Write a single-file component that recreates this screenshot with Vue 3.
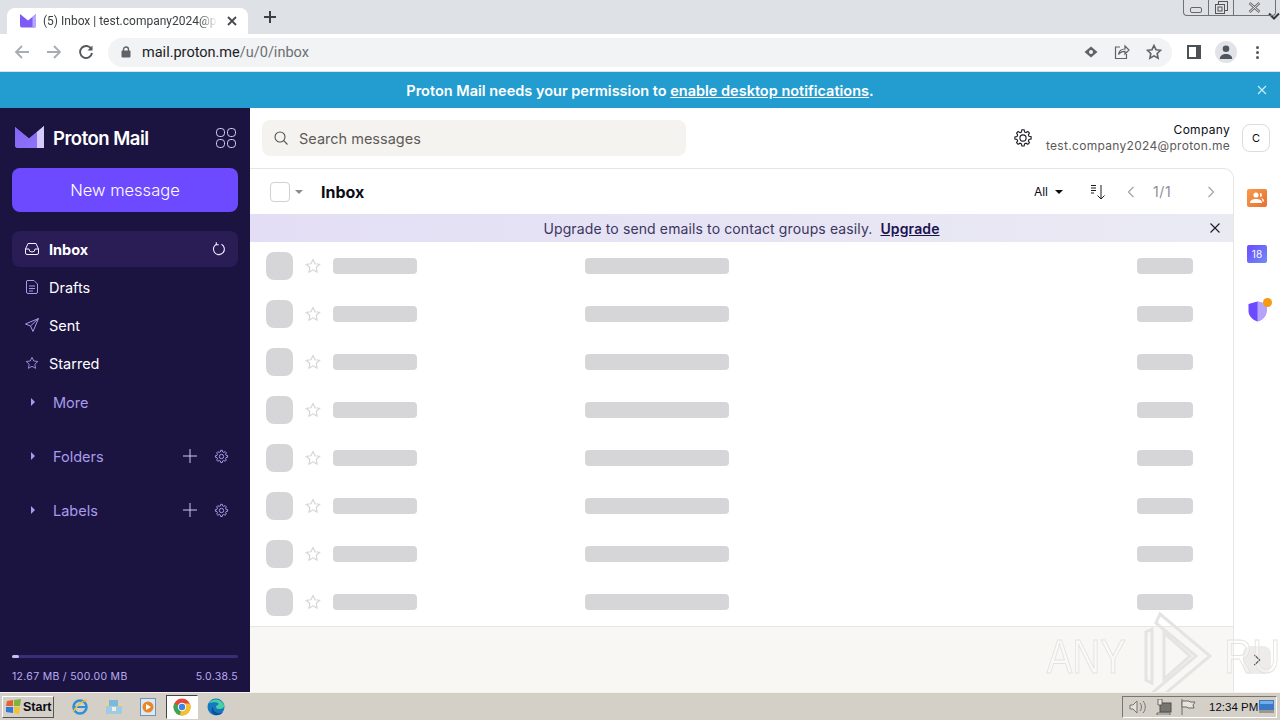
<script setup>
const navItems = [
  { label: 'Drafts', icon: 'drafts' },
  { label: 'Sent', icon: 'sent' },
  { label: 'Starred', icon: 'star' },
]
const groups = ['Folders', 'Labels']
const skeletonRows = 8
const gear = 'M8 1.6h2l.4 1.9 1.3.6 1.7-1 1.4 1.4-1 1.7.6 1.3 1.9.4v2l-1.9.4-.6 1.3 1 1.7-1.4 1.4-1.7-1-1.3.6-.4 1.9H8l-.4-1.9-1.3-.6-1.7 1-1.4-1.4 1-1.7-.6-1.3-1.9-.4V8l1.9-.4.6-1.3-1-1.7 1.4-1.4 1.7 1 1.3-.6z'
const starPath = 'M8 1.5l2 4.2 4.6.6-3.4 3.2.9 4.6L8 11.8l-4.1 2.3.9-4.6L1.4 6.3 6 5.7z'
</script>

<template>
  <div class="screen">
    <div class="tabstrip">
      <div class="tab">
        <svg class="favicon" width="16" height="14" viewBox="0 0 16 14">
          <path d="M0 0l8 6.5L16 0v11.5a2 2 0 0 1-2 2H2a2 2 0 0 1-2-2z" fill="#7d5cf5" />
          <path d="M16 0v13.5h-3.5V3z" fill="#b9a6ff" />
        </svg>
        <span class="tab-title">(5) Inbox | test.company2024@proton.me</span>
        <svg class="tab-close" width="10" height="10" viewBox="0 0 10 10">
          <path d="M1 1l8 8M9 1l-8 8" stroke="#45484d" stroke-width="1.8" />
        </svg>
      </div>
      <svg class="tab-plus" width="14" height="14" viewBox="0 0 14 14">
        <path d="M7 1v12M1 7h12" stroke="#3c4043" stroke-width="2" />
      </svg>
      <svg class="tab-chevron" width="12" height="8" viewBox="0 0 12 8">
        <path d="M1 1.5l5 5 5-5" fill="none" stroke="#35383c" stroke-width="2" />
      </svg>
      <div class="winbtns">
        <div class="winbtn w-min"><span class="min-glyph"></span></div>
        <div class="winbtn w-max">
          <svg width="13" height="13" viewBox="0 0 13 13">
            <rect x="3.5" y=".5" width="9" height="9" fill="#dee1e6" stroke="#555" />
            <rect x=".5" y="3.5" width="9" height="9" fill="#dee1e6" stroke="#555" />
            <rect x="3" y="6" width="4" height="4" fill="none" stroke="#555" />
          </svg>
        </div>
        <div class="winbtn w-close">
          <svg width="13" height="11" viewBox="0 0 13 11">
            <path d="M1.5 1l10 9M11.5 1l-10 9" stroke="#666" stroke-width="2.4" />
            <path d="M1.5 1l10 9M11.5 1l-10 9" stroke="#e9ebee" stroke-width="1" />
          </svg>
        </div>
      </div>
    </div>

    <div class="toolbar">
      <svg class="tb-nav" width="16" height="16" viewBox="0 0 16 16">
        <path d="M15 8H2M8 2L2 8l6 6" fill="none" stroke="#a9acb0" stroke-width="1.8" />
      </svg>
      <svg class="tb-nav" width="16" height="16" viewBox="0 0 16 16">
        <path d="M1 8h13M8 2l6 6-6 6" fill="none" stroke="#a9acb0" stroke-width="1.8" />
      </svg>
      <svg class="tb-nav" width="16" height="16" viewBox="0 0 16 16">
        <path d="M13.4 5.2A6 6 0 1 0 14 9" fill="none" stroke="#55585c" stroke-width="1.9" />
        <path d="M14.5 1.5v5h-5z" fill="#55585c" />
      </svg>
      <div class="omnibox">
        <svg class="lock" width="10" height="12" viewBox="0 0 10 12">
          <path d="M2.5 5V3.5a2.5 2.5 0 0 1 5 0V5" fill="none" stroke="#5f6368" stroke-width="1.4" />
          <rect x=".5" y="4.5" width="9" height="7" rx="1" fill="#5f6368" />
        </svg>
        <span class="url"><b>mail.proton.me</b>/u/0/inbox</span>
        <svg class="omni-icon" width="14" height="12" viewBox="0 0 14 12">
          <path d="M7 .5L13.5 6 7 11.5.5 6z" fill="#5f6368" />
          <circle cx="7" cy="6" r="2" fill="#f1f3f4" />
        </svg>
        <svg class="omni-icon" width="16" height="16" viewBox="0 0 16 16">
          <path d="M6 3H1.5v11.5h11V10" fill="none" stroke="#5f6368" stroke-width="1.2" />
          <path d="M4.5 10.5C5 6.5 8 5 11 5V2l4 4-4 4V7.3c-2.5 0-5 .8-6.500 3.200z" fill="none" stroke="#5f6368" stroke-width="1.2" />
        </svg>
        <svg class="omni-icon" width="16" height="16" viewBox="0 0 16 16">
          <path :d="starPath" fill="none" stroke="#5f6368" stroke-width="1.6" />
        </svg>
      </div>
      <svg class="side-panel" width="14" height="14" viewBox="0 0 14 14">
        <rect x="1" y="1" width="12" height="12" fill="#fff" stroke="#4d5054" stroke-width="2" />
        <rect x="9" y="1" width="4" height="12" fill="#4d5054" />
      </svg>
      <div class="profile">
        <svg width="14" height="14" viewBox="0 0 14 14">
          <circle cx="7" cy="3.800" r="3.300" fill="#51555e" />
          <path d="M.8 14c0-3.500 2.800-5 6.200-5s6.200 1.500 6.200 5z" fill="#51555e" />
        </svg>
      </div>
      <div class="kebab"><i></i><i></i><i></i></div>
    </div>

    <div class="banner">
      <span>Proton Mail needs your permission to <u>enable desktop notifications</u>.</span>
      <svg class="banner-close" width="10" height="10" viewBox="0 0 10 10">
        <path d="M1 1l8 8M9 1l-8 8" stroke="#c6eefb" stroke-width="1.200" />
      </svg>
    </div>

    <div class="app">
      <aside class="sidebar">
        <div class="brand">
          <svg width="29" height="23" viewBox="0 0 29 23">
            <defs>
              <linearGradient id="mailg" x1="0" y1="0" x2="1" y2="1">
                <stop offset="0" stop-color="#8f74f8" />
                <stop offset="1" stop-color="#c8b8ff" />
              </linearGradient>
            </defs>
            <path d="M0 1l14 11.500L29 0v19a3 3 0 0 1-3 3H3a3 3 0 0 1-3-3z" fill="url(#mailg)" />
            <path d="M29 0v22h-7V6z" fill="#d5caff" />
            <path d="M0 1l14 11.500L22 6v16H3a3 3 0 0 1-3-3z" fill="#7f5ff5" opacity=".75" />
          </svg>
          <span class="wordmark">Proton Mail</span>
          <svg class="apps" width="20" height="20" viewBox="0 0 20 20" fill="none" stroke="#d6cffb">
            <rect x=".5" y=".5" width="8" height="8" rx="3.200" />
            <rect x="11.500" y=".5" width="8" height="8" rx="3.200" />
            <rect x=".5" y="11.500" width="8" height="8" rx="3.200" />
            <rect x="11.500" y="11.500" width="8" height="8" rx="3.200" />
          </svg>
        </div>
        <button class="compose">New message</button>

        <nav class="nav">
          <div class="nav-item active">
            <svg class="nav-icon" width="14" height="14" viewBox="0 0 14 14" fill="none" stroke="#f2efff">
              <path d="M.5 7L3 1.500h8L13.500 7v4a1.500 1.500 0 0 1-1.500 1.500H2A1.500 1.500 0 0 1 .5 11z" />
              <path d="M.5 7H4a3 3 0 0 0 6 0h3.500" />
            </svg>
            <span class="nav-label">Inbox</span>
            <svg class="refresh" width="14" height="14" viewBox="0 0 14 14" fill="none" stroke="#f2efff" stroke-width="1.100">
              <path d="M9.500 2.300A5.500 5.500 0 1 1 4.500 2.200" />
              <path d="M4.300 .3v2.500h2.500" />
            </svg>
          </div>
          <div v-for="item in navItems" :key="item.label" class="nav-item">
            <svg v-if="item.icon === 'drafts'" class="nav-icon" width="14" height="14" viewBox="0 0 14 14" fill="none" stroke="#a99bec">
              <path d="M2 .5h7L12.500 4v8a1.500 1.500 0 0 1-1.500 1.500H3A1.500 1.500 0 0 1 1.500 12V1zM4 6h6M4 8.500h6M4 11h4" />
            </svg>
            <svg v-else-if="item.icon === 'sent'" class="nav-icon" width="14" height="14" viewBox="0 0 14 14" fill="none" stroke="#a99bec">
              <path d="M13.500.5L.5 6l5 2 2.500 5.500zM5.500 8L13.500.5" />
            </svg>
            <svg v-else class="nav-icon" width="14" height="14" viewBox="0 0 16 16" fill="none" stroke="#a99bec">
              <path :d="starPath" />
            </svg>
            <span class="nav-label">{{ item.label }}</span>
          </div>
          <div class="nav-item muted more">
            <span class="caret-right"></span>
            <span class="nav-label">More</span>
          </div>
          <div v-for="group in groups" :key="group" class="nav-item muted group">
            <span class="caret-right"></span>
            <span class="nav-label">{{ group }}</span>
            <svg class="plus" width="14" height="14" viewBox="0 0 14 14">
              <path d="M7 0v14M0 7h14" stroke="#cfc7f7" />
            </svg>
            <svg class="cog" width="15" height="15" viewBox="0 0 18 18" fill="none" stroke="#a99bec" stroke-width="1.200">
              <path :d="gear" />
              <circle cx="9" cy="9" r="2.600" />
            </svg>
          </div>
        </nav>

        <div class="storage">
          <div class="storage-track"><div class="storage-fill" :style="{ width: '3%' }"></div></div>
          <div class="storage-meta">
            <span>12.67 MB / 500.00 MB</span>
            <span>5.0.38.5</span>
          </div>
        </div>
      </aside>

      <main class="main">
        <header class="topbar">
          <div class="search">
            <svg width="14" height="14" viewBox="0 0 14 14" fill="none" stroke="#55534f" stroke-width="1.100">
              <circle cx="6" cy="6" r="5" />
              <path d="M9.700 9.700L13.500 13.500" />
            </svg>
            <span>Search messages</span>
          </div>
          <svg class="top-gear" width="20" height="20" viewBox="0 0 18 18" fill="none" stroke="#1c1b24" stroke-width="1">
            <path :d="gear" />
            <circle cx="9" cy="9" r="2.800" />
          </svg>
          <div class="account">
            <div class="account-name">Company</div>
            <div class="account-mail">test.company2024@proton.me</div>
          </div>
          <div class="avatar">C</div>
        </header>

        <div class="workspace">
          <section class="mail-pane">
            <div class="list-tools">
              <span class="checkbox"></span>
              <span class="caret-down soft"></span>
              <h1>Inbox</h1>
              <span class="all">All</span>
              <span class="caret-down"></span>
              <svg class="sort" width="14" height="16" viewBox="0 0 14 16" fill="none" stroke="#1c1b24">
                <path d="M0 1.500h5M0 4h5M0 6.500h5M0 9h3" />
                <path d="M10 1v14M6.500 11.500L10 15l3.500-3.500" />
              </svg>
              <svg class="pager first" width="8" height="12" viewBox="0 0 8 12">
                <path d="M6.500 1L1.500 6l5 5" fill="none" stroke="#a5a4ab" stroke-width="1.300" />
              </svg>
              <span class="pages">1/1</span>
              <svg class="pager" width="8" height="12" viewBox="0 0 8 12">
                <path d="M1.500 1l5 5-5 5" fill="none" stroke="#a5a4ab" stroke-width="1.300" />
              </svg>
            </div>
            <div class="upsell">
              <span>Upgrade to send emails to contact groups easily.</span>
              <a>Upgrade</a>
              <svg class="upsell-close" width="10" height="10" viewBox="0 0 10 10">
                <path d="M.5.5l9 9M9.500.5l-9 9" stroke="#1c1b24" stroke-width="1.100" />
              </svg>
            </div>
            <div v-for="n in skeletonRows" :key="n" class="row">
              <span class="sk-avatar"></span>
              <svg class="sk-star" width="16" height="16" viewBox="0 0 16 16">
                <path :d="starPath" fill="none" stroke="#d4d3d8" stroke-width="1.100" />
              </svg>
              <span class="sk sk-name"></span>
              <span class="sk sk-subject"></span>
              <span class="sk sk-date"></span>
            </div>
            <div class="pane-footer"></div>
          </section>

          <aside class="rail">
            <div class="rail-app contacts">
              <svg width="14" height="12" viewBox="0 0 14 12" fill="#fff">
                <circle cx="6" cy="3" r="2.600" />
                <path d="M0 11c0-3 2.500-4 6-4s6 1 6 4z" />
                <path d="M10 1a2 2 0 0 1 0 4zM11 6c2 .3 3 1.500 3 3.500h-1.500c0-1.500-.5-2.500-1.500-3.500z" />
              </svg>
            </div>
            <div class="rail-app calendar">18</div>
            <div class="rail-shield">
              <svg width="19" height="21" viewBox="0 0 19 21">
                <path d="M.5 3L9.500.5 18.500 3v7c0 5-4 9-9 10.500C4.500 19 .5 15 .5 10z" fill="#6d4aff" />
                <path d="M9.500.5L18.500 3v7c0 5-4 9-9 10.500z" fill="#b5a4fb" />
              </svg>
              <i></i>
            </div>
            <div class="rail-toggle">
              <svg width="8" height="12" viewBox="0 0 8 12">
                <path d="M1.500 1l5 5-5 5" fill="none" stroke="#1c1b24" stroke-width="1.300" />
              </svg>
            </div>
          </aside>

          <div class="watermark">
            <span>ANY</span>
            <svg width="74" height="94" viewBox="0 0 74 94" fill="none" stroke="#e4e4e2" stroke-width="3">
              <path d="M14 20L8 23v48l6 3zM22 5l50 42-50 42-8-5 44-37L18 14z" />
              <path d="M26 24l26 23-26 23z" />
            </svg>
            <span>RUN</span>
          </div>
        </div>
      </main>
    </div>

    <footer class="taskbar">
      <div class="start">
        <svg width="16" height="15" viewBox="0 0 16 15">
          <path d="M1 2l6-1v6H0z" fill="#e8632b" />
          <path d="M8 1l7-1-1 7H8z" fill="#7db53c" />
          <path d="M0 8h7v6l-7-1z" fill="#2f7bd6" />
          <path d="M8 8h6l-1 7-5-1z" fill="#f2c32e" />
        </svg>
        <b>Start</b>
      </div>
      <div class="quick ie">
        <svg width="18" height="18" viewBox="0 0 18 18" fill="none">
          <circle cx="9" cy="9" r="6.500" stroke="#2f8fd8" stroke-width="2.500" />
          <path d="M3 9h12" stroke="#2f8fd8" stroke-width="2" />
          <path d="M2 14C5 8 11 3 16 2" stroke="#eec23e" stroke-width="1.500" />
        </svg>
      </div>
      <div class="quick folder">
        <svg width="18" height="16" viewBox="0 0 18 16">
          <path d="M1 3h6l1 2h9v10H1z" fill="#e9d48a" />
          <rect x="4" y="1" width="9" height="6" fill="#7cb7dc" />
          <path d="M1 7h16v8H1z" fill="#9fcbe4" />
          <rect x="7" y="8" width="4" height="4" fill="#f3efe0" />
        </svg>
      </div>
      <div class="quick media">
        <svg width="16" height="18" viewBox="0 0 16 18">
          <rect x=".5" y=".5" width="15" height="17" fill="#dce8f2" stroke="#6e94b8" />
          <circle cx="8" cy="9" r="5.500" fill="#e8872a" />
          <path d="M6 6l5 3-5 3z" fill="#fff" />
        </svg>
      </div>
      <div class="quick chrome-task">
        <svg width="18" height="18" viewBox="0 0 18 18">
          <circle cx="9" cy="9" r="8.500" fill="#e0483c" />
          <path d="M9 9L1.400 5.500A8.500 8.500 0 0 0 7 17.300z" fill="#3aa757" />
          <path d="M9 5.500h7.800A8.500 8.500 0 0 1 7 17.300z" fill="#f6c02c" />
          <circle cx="9" cy="9" r="4.200" fill="#fff" />
          <circle cx="9" cy="9" r="3.200" fill="#3f83e8" />
        </svg>
      </div>
      <div class="quick edge">
        <svg width="18" height="18" viewBox="0 0 18 18">
          <circle cx="9" cy="9" r="8.500" fill="#1577c2" />
          <path d="M2 5C5 0 14 0 17 7c.5 3-2 4-5 4-2 0-3-1-3-2 0-2 4-2 2-4-2-1.500-6 0-9 0z" fill="#45d1a0" />
          <path d="M6 9c0 5 5 8 10 5-2 3.500-7 4-10 1.500C4 14 4 11 6 9z" fill="#0d4f92" />
        </svg>
      </div>
      <div class="tray">
        <svg width="18" height="14" viewBox="0 0 18 14" fill="none" stroke="#77756f">
          <path d="M1 5h3l4-4v12l-4-4H1z" fill="#e5e2da" />
          <path d="M11 3c2 2 2 6 0 8M14 1c3 3 3 9 0 12" />
        </svg>
        <svg class="tray-net" width="16" height="16" viewBox="0 0 16 16">
          <rect x="4" y="4" width="11" height="9" fill="#77756f" stroke="#4f4e4a" />
          <path d="M2 0h4v6H2zM1 14h13v2H1z" fill="#e7e4dc" stroke="#4f4e4a" stroke-width=".8" />
        </svg>
        <svg class="tray-flag" width="16" height="16" viewBox="0 0 16 16" fill="#e7e4dc" stroke="#6b6a65">
          <path d="M2 0v16" />
          <path d="M2 2h7l1 1h5l-2 3 1 3H8L7 8H2z" />
        </svg>
        <span class="clock">12:34 PM</span>
        <svg class="tray-desk" width="15" height="13" viewBox="0 0 15 13">
          <rect width="15" height="13" fill="#3a78c8" />
          <rect y="10" width="15" height="3" fill="#9a9890" />
          <rect x="1" y="1" width="13" height="3" fill="#74aee6" />
        </svg>
      </div>
    </footer>
  </div>
</template>

<style>
html, body {
  margin: 0;
  overflow: hidden;
}
</style>

<style scoped>
* {
  box-sizing: border-box;
}

.screen {
  width: 1280px;
  height: 720px;
  display: flex;
  flex-direction: column;
  overflow: hidden;
  font-family: Inter, "Liberation Sans", sans-serif;
  color: #0c0c14;
}

/* browser chrome */
.tabstrip {
  height: 34px;
  flex: none;
  background: #dee1e6;
  display: flex;
  align-items: flex-end;
  position: relative;
}

.tab {
  width: 241px;
  height: 26px;
  margin-left: 7px;
  padding: 0 10px 0 13px;
  background: #fff;
  border-radius: 8px 8px 0 0;
  display: flex;
  align-items: center;
  gap: 7px;
}

.favicon {
  flex: none;
}

.tab-title {
  width: 174px;
  overflow: hidden;
  white-space: nowrap;
  font: 12px Roboto, sans-serif;
  color: #3c4043;
  -webkit-mask-image: linear-gradient(to right, #000 90%, transparent);
  mask-image: linear-gradient(to right, #000 90%, transparent);
}

.tab-close {
  flex: none;
  margin-left: 3px;
}

.tab-plus {
  margin: 0 0 10px 15px;
}

.tab-chevron {
  margin: 0 0 14px auto;
}

.winbtns {
  position: absolute;
  top: -1px;
  right: 4px;
  height: 17px;
  display: flex;
  border: 1px solid #6f7276;
  border-top: 0;
  border-radius: 0 0 4px 4px;
}

.winbtn {
  display: flex;
  align-items: center;
  justify-content: center;
}

.w-min {
  width: 25px;
  border-right: 1px solid #6f7276;
}

.w-max {
  width: 25px;
  border-right: 1px solid #6f7276;
}

.w-close {
  width: 41px;
}

.min-glyph {
  width: 12px;
  height: 6px;
  margin-top: 5px;
  border: 1px solid #666;
  border-radius: 2px;
}

.toolbar {
  height: 38px;
  flex: none;
  background: #fff;
  border-bottom: 1px solid #dde0e4;
  display: flex;
  align-items: center;
  padding: 0 0 1px 14px;
}

.tb-nav {
  margin-right: 16px;
}

.tb-nav:nth-child(3) {
  margin-right: 14px;
}

.omnibox {
  width: 1064px;
  height: 29px;
  border-radius: 15px;
  background: #f1f3f4;
  display: flex;
  align-items: center;
  padding-left: 13px;
}

.lock {
  flex: none;
}

.url {
  margin-left: 11px;
  font: 14.5px Roboto, sans-serif;
  color: #6c7075;
  flex: 1;
}

.url b {
  font-weight: 400;
  color: #202124;
}

.omni-icon {
  flex: none;
  margin-right: 16px;
}

.omni-icon:last-child {
  margin-right: 10px;
}

.side-panel {
  margin-left: 15px;
}

.profile {
  width: 22px;
  height: 22px;
  margin-left: 14px;
  border-radius: 50%;
  background: #e1e3e8;
  display: flex;
  align-items: center;
  justify-content: center;
  overflow: hidden;
}

.kebab {
  margin-left: 19px;
  display: flex;
  flex-direction: column;
  gap: 2px;
}

.kebab i {
  width: 3px;
  height: 3px;
  border-radius: 50%;
  background: #55585c;
}

.banner {
  height: 36px;
  flex: none;
  background: #239dd0;
  color: #fff;
  font-size: 14.5px;
  font-weight: 600;
  display: flex;
  align-items: center;
  justify-content: center;
  position: relative;
}

.banner-close {
  position: absolute;
  right: 13px;
  top: 13px;
}

/* proton app */
.app {
  flex: 1;
  min-height: 0;
  display: flex;
}

.sidebar {
  width: 250px;
  flex: none;
  background: #1b1340;
  color: #fff;
  display: flex;
  flex-direction: column;
  padding: 0 12px;
}

.brand {
  height: 60px;
  display: flex;
  align-items: center;
  padding: 0 0 1px 3px;
}

.wordmark {
  margin-left: 9px;
  font-size: 18.500px;
  font-weight: 600;
  letter-spacing: -.5px;
}

.apps {
  margin-left: auto;
  margin-right: 2px;
}

.compose {
  height: 44px;
  border: 0;
  border-radius: 8px;
  background: #6d4aff;
  color: #fff;
  font: 300 16.500px Inter, sans-serif;
}

.nav {
  margin-top: 19px;
  display: flex;
  flex-direction: column;
  gap: 2px;
}

.nav-item {
  height: 36px;
  display: flex;
  align-items: center;
  padding: 0 12px 0 13px;
  border-radius: 8px;
  font-size: 14.500px;
}

.nav-item.active {
  background: #2a1d55;
  font-weight: 700;
}

.nav-icon {
  flex: none;
  margin-right: 10px;
}

.nav-label {
  flex: 1;
}

.muted {
  color: #a99bec;
}

.more {
  margin-top: 1px;
}

.group {
  margin-top: 16px;
  padding-right: 9px;
}

.caret-right {
  width: 0;
  height: 0;
  margin: 0 18px 0 6px;
  border-left: 4px solid #a99bec;
  border-top: 4px solid transparent;
  border-bottom: 4px solid transparent;
}

.plus {
  margin-right: 17px;
}

.storage {
  margin-top: auto;
  padding-bottom: 9px;
}

.storage-track {
  height: 3px;
  background: #3b2d7a;
  border-radius: 2px;
}

.storage-fill {
  height: 100%;
  background: #c7bcf8;
  border-radius: 2px;
}

.storage-meta {
  margin-top: 12px;
  display: flex;
  justify-content: space-between;
  font-size: 10.500px;
  color: #b7acf0;
  letter-spacing: .3px;
}

.main {
  flex: 1;
  min-width: 0;
  display: flex;
  flex-direction: column;
}

.topbar {
  height: 60px;
  flex: none;
  display: flex;
  align-items: center;
  padding: 0 10px 0 12px;
  background: #fff;
}

.search {
  width: 424px;
  height: 36px;
  border-radius: 8px;
  background: #f5f3f0;
  display: flex;
  align-items: center;
  gap: 11px;
  padding-left: 12px;
  font-size: 14.500px;
  color: #5d5b58;
}

.top-gear {
  margin-left: auto;
  margin-right: 13px;
}

.account {
  text-align: right;
  margin-right: 12px;
  font-size: 12px;
  line-height: 16px;
  letter-spacing: .3px;
}

.account-mail {
  color: #5c5958;
}

.avatar {
  width: 28px;
  height: 28px;
  border: 1px solid #dedbd8;
  border-radius: 8px;
  display: flex;
  align-items: center;
  justify-content: center;
  font-size: 11px;
}

.workspace {
  flex: 1;
  min-height: 0;
  display: flex;
  position: relative;
}

.mail-pane {
  width: 984px;
  flex: none;
  display: flex;
  flex-direction: column;
  background: #fff;
  border-top: 1px solid #e8e6e3;
  border-right: 1px solid #e8e6e3;
  border-top-right-radius: 10px;
}

.list-tools {
  height: 45px;
  flex: none;
  display: flex;
  align-items: center;
  padding-left: 20px;
}

.checkbox {
  width: 20px;
  height: 20px;
  border: 1px solid #d2d0cd;
  border-radius: 4px;
}

.caret-down {
  width: 0;
  height: 0;
  border-top: 4px solid #0c0c14;
  border-left: 4px solid transparent;
  border-right: 4px solid transparent;
}

.caret-down.soft {
  margin-left: 5px;
  border-top-color: #8c8b90;
}

.list-tools h1 {
  margin: 0 0 0 18px;
  flex: 1;
  font-size: 16px;
  font-weight: 700;
}

.all {
  margin-right: 7px;
  font-size: 12px;
}

.sort {
  margin: 0 22px 0 28px;
}

.pager {
  margin-right: 18px;
}

.pager.first {
  margin-right: 18px;
}

.pages {
  width: 24px;
  margin-right: 30px;
  font-size: 14px;
  color: #8f8e94;
  letter-spacing: .6px;
}

.upsell {
  height: 28px;
  flex: none;
  background: linear-gradient(to right, #e3def5, #eaeaf3);
  display: flex;
  align-items: center;
  justify-content: center;
  gap: 8px;
  position: relative;
  font-size: 14px;
  letter-spacing: .12px;
  color: #3c3560;
}

.upsell a {
  font-weight: 600;
  color: #1a1450;
  text-decoration: underline;
}

.upsell-close {
  position: absolute;
  right: 13px;
  top: 9px;
}

.row {
  height: 48px;
  flex: none;
  display: flex;
  align-items: center;
  padding-left: 16px;
}

.sk-avatar {
  width: 27px;
  height: 28px;
  border-radius: 8px;
  background: #d6d6d8;
}

.sk-star {
  margin: 0 12px 0 12px;
}

.sk {
  height: 16px;
  border-radius: 4px;
  background: #d6d6d8;
}

.sk-name {
  width: 84px;
}

.sk-subject {
  width: 144px;
  margin-left: 168px;
}

.sk-date {
  width: 56px;
  margin-left: auto;
  margin-right: 40px;
}

.pane-footer {
  flex: 1;
  background: #f8f7f4;
  border-top: 1px solid #e8e6e3;
}

.rail {
  flex: 1;
  background: #fff;
  display: flex;
  flex-direction: column;
  align-items: center;
  padding-top: 21px;
}

.rail-app {
  width: 20px;
  height: 18px;
  border-radius: 2px;
  display: flex;
  align-items: center;
  justify-content: center;
}

.contacts {
  background: linear-gradient(135deg, #f59b4d, #e9702f);
}

.calendar {
  margin-top: 38px;
  background: linear-gradient(135deg, #6d4aff, #6f8cf8);
  color: #fff;
  font-size: 10px;
}

.rail-shield {
  margin-top: 38px;
  position: relative;
  display: flex;
}

.rail-shield i {
  position: absolute;
  top: -3px;
  right: -5px;
  width: 9px;
  height: 9px;
  border-radius: 50%;
  background: #f59a12;
}

.rail-toggle {
  margin-top: auto;
  margin-bottom: 18px;
  width: 28px;
  height: 28px;
  border-radius: 8px;
  background: #eeecea;
  display: flex;
  align-items: center;
  justify-content: center;
}

.watermark {
  position: absolute;
  left: 787px;
  top: 441px;
  display: flex;
  align-items: center;
  gap: 2px;
  font: 48px "Liberation Sans Narrow", "Liberation Sans", sans-serif;
  color: rgba(255, 255, 255, .3);
  -webkit-text-stroke: 1px #e2e2e0;
  pointer-events: none;
}

.watermark span {
  display: inline-block;
  transform: scaleX(.8);
}

/* windows taskbar */
.taskbar {
  height: 28px;
  flex: none;
  background: #d4d0c8;
  border-top: 1px solid #f4f2ec;
  display: flex;
  align-items: center;
  padding-left: 2px;
  position: relative;
}

.start {
  width: 52px;
  height: 22px;
  display: flex;
  align-items: center;
  gap: 1px;
  padding-left: 3px;
  background: #d4d0c8;
  border: 1px solid;
  border-color: #fff #555 #555 #fff;
  font: 12.500px "Liberation Sans", sans-serif;
}

.quick {
  width: 32px;
  display: flex;
  justify-content: center;
  margin-left: 2px;
}

.ie {
  margin-left: 10px;
}

.chrome-task {
  height: 24px;
  align-items: center;
  background: #fff;
  border: 1px solid;
  border-color: #444 #fff #fff #444;
}

.tray {
  margin-left: auto;
  margin-right: 3px;
  width: 155px;
  height: 22px;
  display: flex;
  align-items: center;
  padding-left: 6px;
  border: 1px solid;
  border-color: #77756f #fff #fff #77756f;
}

.tray-net {
  margin-left: 9px;
}

.tray-flag {
  margin-left: 8px;
}

.clock {
  margin-left: 13px;
  font: 11.500px "Liberation Sans", sans-serif;
  white-space: nowrap;
}

.tray-desk {
  margin-left: auto;
  margin-right: 2px;
}
</style>
